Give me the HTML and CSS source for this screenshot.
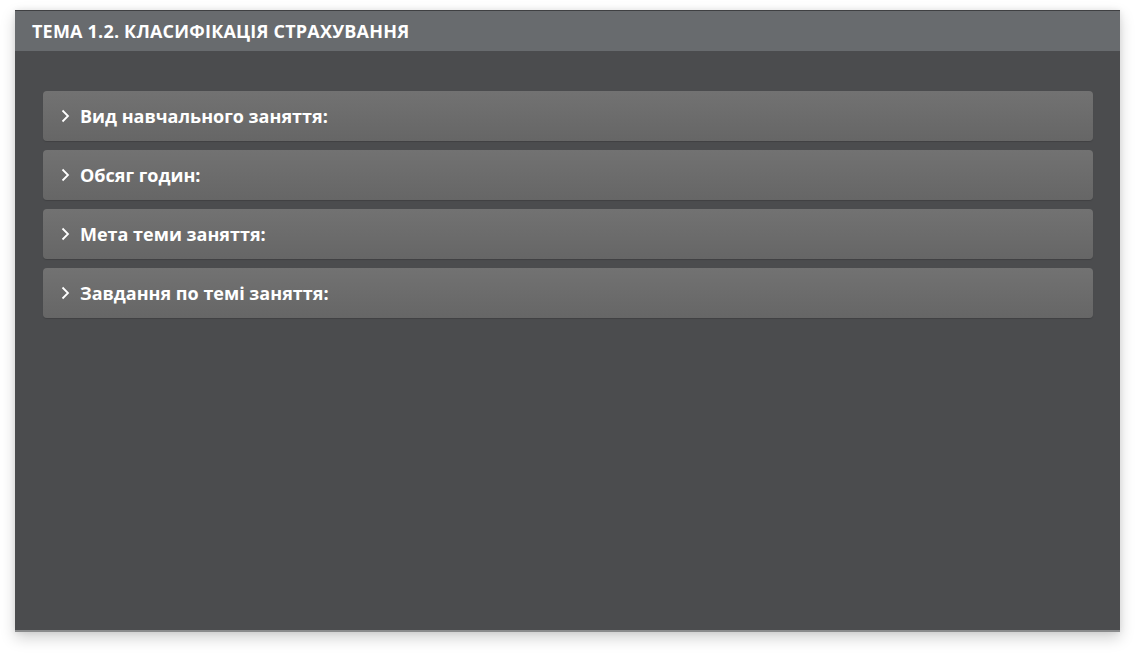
FILE: index.html
```html
<!DOCTYPE html>
<html lang="uk">
<head>
<meta charset="utf-8">
<link rel="stylesheet" href="styles.css">
</head>
<body>
<div class="panel">
  <div class="panel-header">ТЕМА 1.2. КЛАСИФІКАЦІЯ СТРАХУВАННЯ</div>
  <div class="panel-body">
    <div class="item"><svg class="chev" viewBox="0 0 9 14" width="9" height="14"><path d="M1.5 1.5 L7 7 L1.5 12.5" fill="none" stroke="#fff" stroke-width="1.8"/></svg><span>Вид навчального заняття:</span></div>
    <div class="item"><svg class="chev" viewBox="0 0 9 14" width="9" height="14"><path d="M1.5 1.5 L7 7 L1.5 12.5" fill="none" stroke="#fff" stroke-width="1.8"/></svg><span>Обсяг годин:</span></div>
    <div class="item"><svg class="chev" viewBox="0 0 9 14" width="9" height="14"><path d="M1.5 1.5 L7 7 L1.5 12.5" fill="none" stroke="#fff" stroke-width="1.8"/></svg><span>Мета теми заняття:</span></div>
    <div class="item"><svg class="chev" viewBox="0 0 9 14" width="9" height="14"><path d="M1.5 1.5 L7 7 L1.5 12.5" fill="none" stroke="#fff" stroke-width="1.8"/></svg><span>Завдання по темі заняття:</span></div>
  </div>
</div>
</body>
</html>
```
FILE: styles.css
```css
html, body {
  margin: 0;
  padding: 0;
  background: #ffffff;
}
body {
  padding: 10px 16px 21px 15px;
  font-family: "Open Sans", "Noto Sans", sans-serif;
}
.panel {
  height: 622px;
  display: flex;
  flex-direction: column;
  background: #4b4c4e;
  border-top: 1px solid #3f4042;
  border-bottom: 2px solid #8a8b8c;
  box-shadow: 0 6px 14px rgba(0,0,0,0.18), 0 0 6px rgba(0,0,0,0.08);
  box-sizing: border-box;
}
.panel-header {
  height: 40px;
  flex: none;
  background: #686b6e;
  color: #ffffff;
  font-weight: 700;
  font-size: 18px;
  display: flex;
  align-items: center;
  padding-left: 17px;
  letter-spacing: 0.2px;
}
.panel-body {
  padding: 40px 27px 0 28px;
  display: flex;
  flex-direction: column;
  gap: 9px;
}
.item {
  height: 50px;
  box-sizing: border-box;
  border-radius: 4px;
  background: linear-gradient(#727272, #666666);
  display: flex;
  align-items: center;
  padding-left: 18px;
  gap: 10px;
  color: #ffffff;
  font-weight: 700;
  font-size: 18px;
  box-shadow: 0 1px 1px rgba(0,0,0,0.15);
}
.chev {
  flex: none;
}
```
